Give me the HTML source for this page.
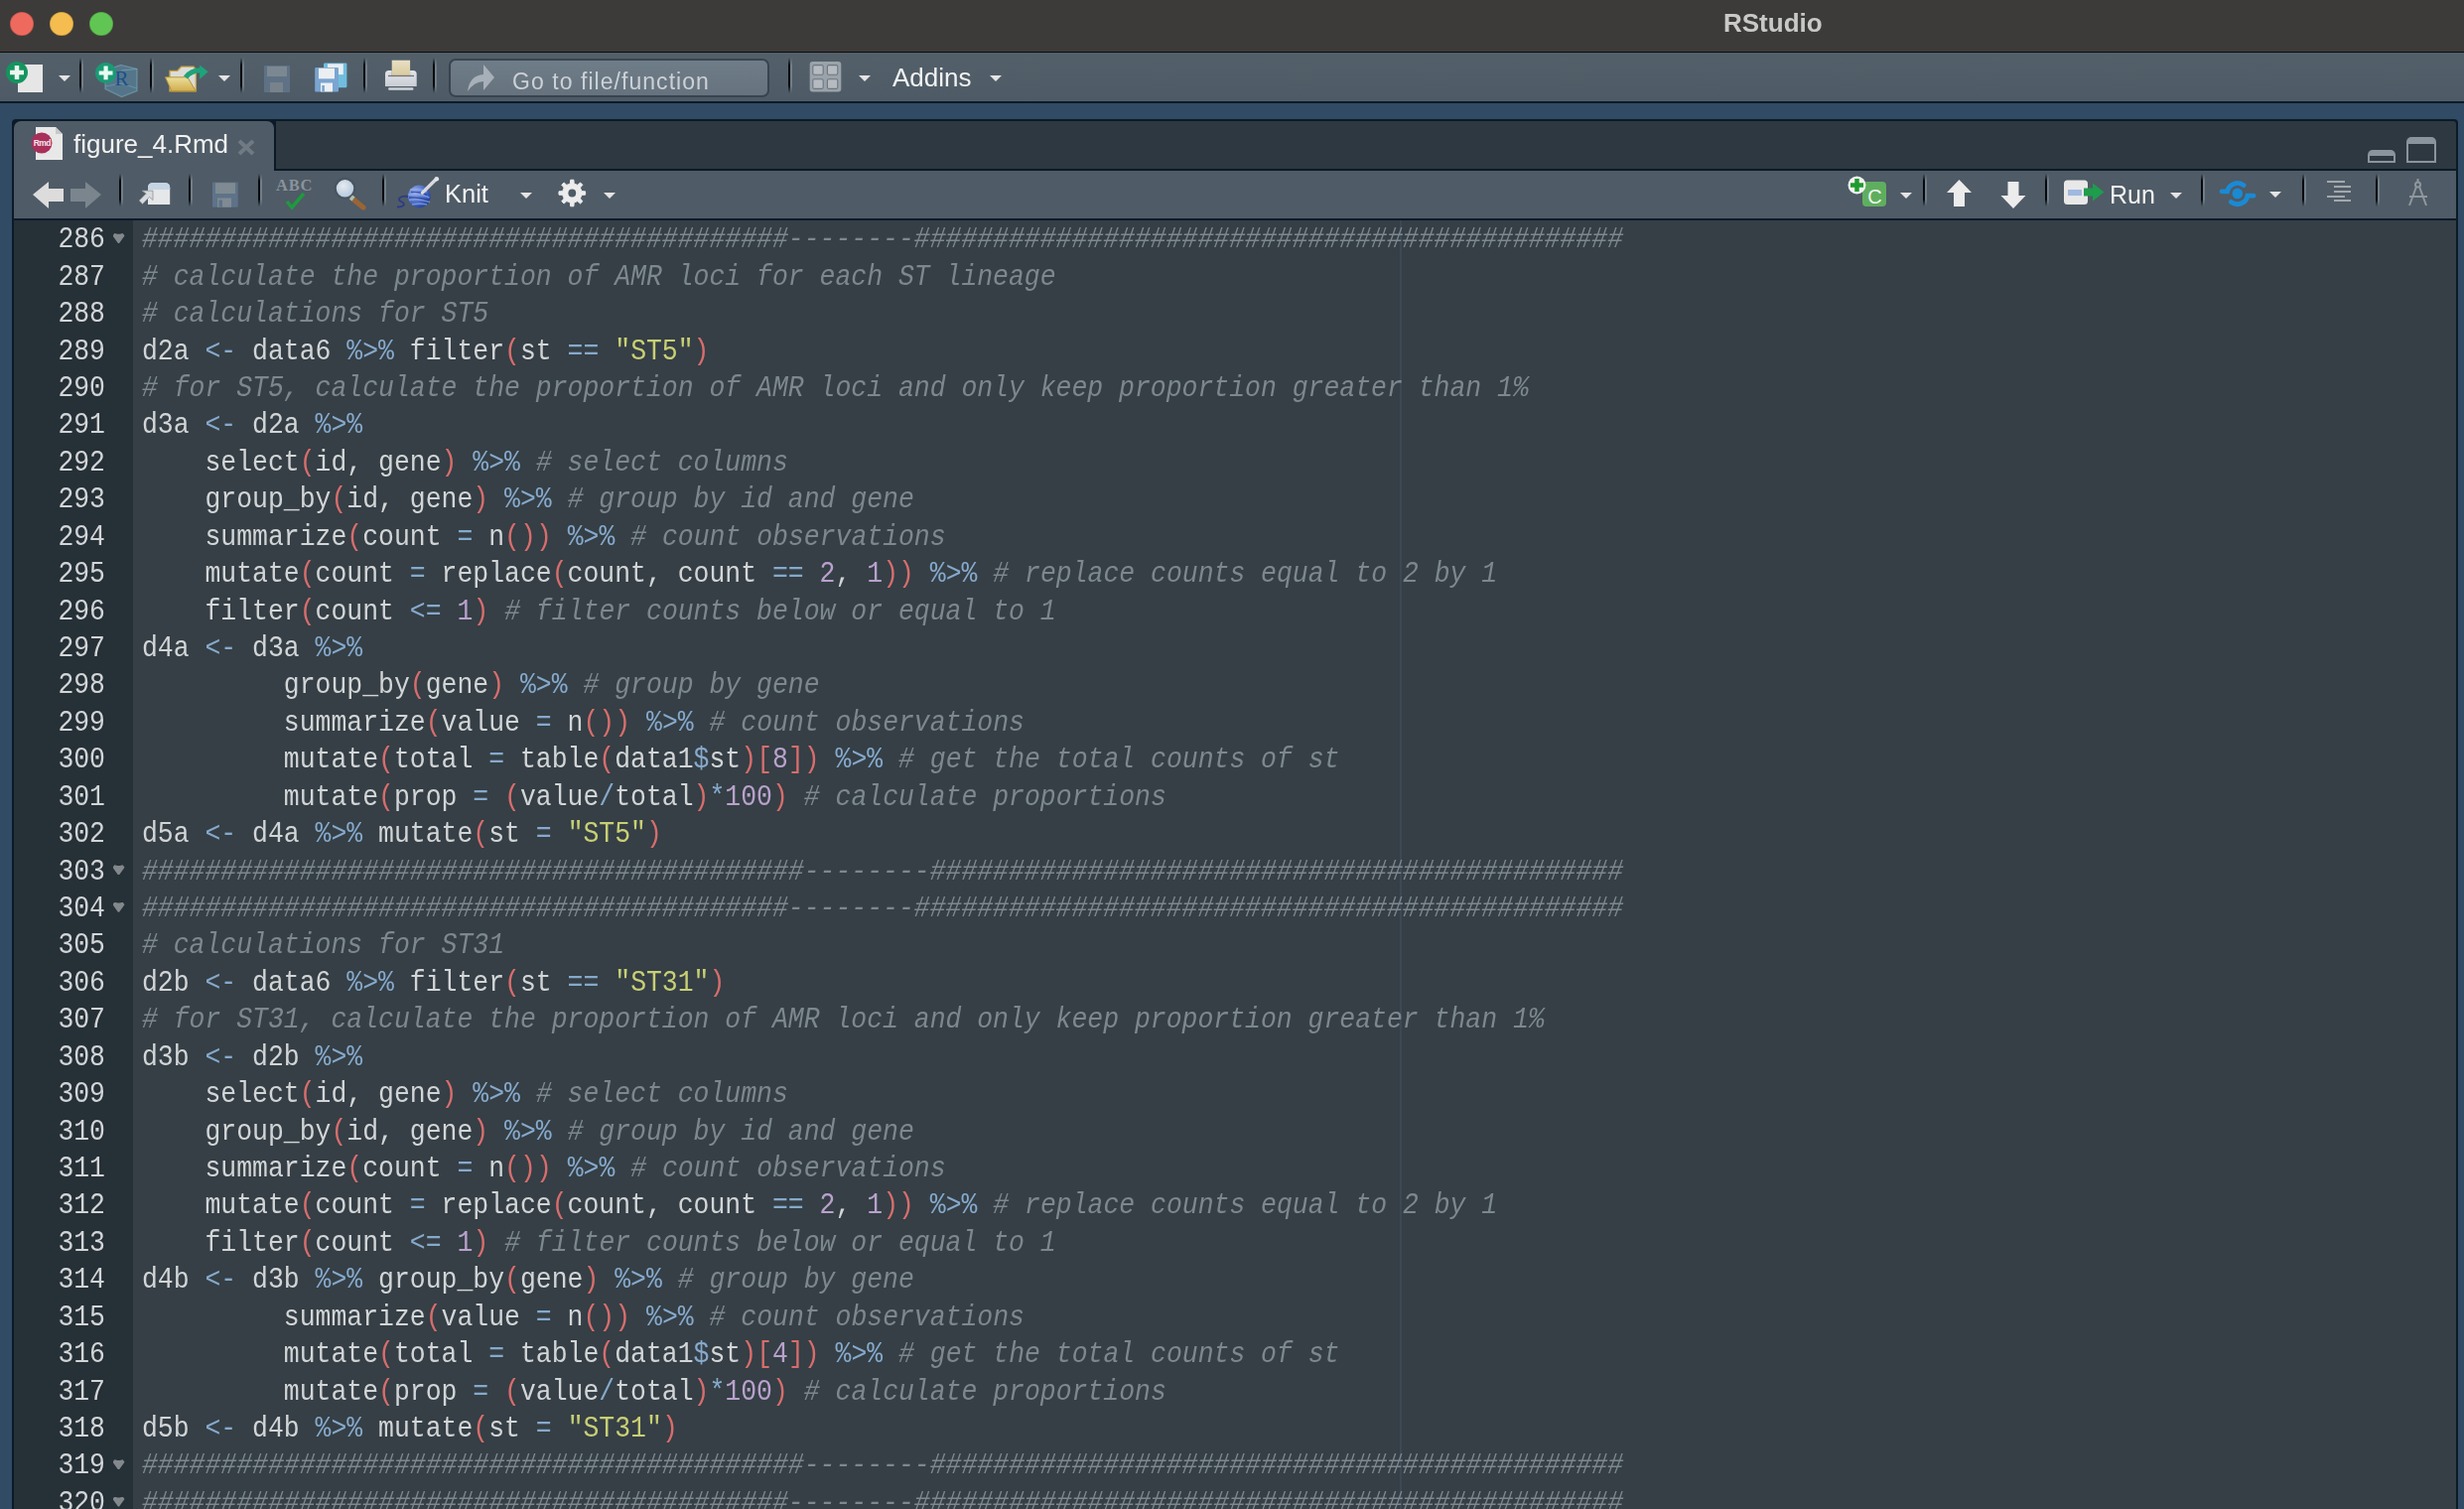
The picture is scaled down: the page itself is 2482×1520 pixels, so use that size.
<!DOCTYPE html>
<html><head><meta charset="utf-8">
<style>
html,body{margin:0;padding:0;}
body{-webkit-font-smoothing:antialiased;width:2482px;height:1520px;overflow:hidden;position:relative;background:#304b63;font-family:"Liberation Sans",sans-serif;}
.abs{position:absolute;}
#title{left:0;top:0;width:2482px;height:52px;background:#3d3b39;}
#titleline{left:0;top:52px;width:2482px;height:1px;background:#0b0b0b;}
.tl{position:absolute;width:24px;height:24px;border-radius:50%;top:12px;box-shadow:inset 0 0 0 0.8px rgba(0,0,0,0.18);}
#ttext{will-change:transform;left:1736px;top:6px;font-weight:bold;font-size:26px;color:#c9c9c9;line-height:34px;}
#tbar{left:0;top:53px;width:2482px;height:49px;background:linear-gradient(#53606a,#4e5b66);}
#tbarline{left:0;top:102px;width:2482px;height:2px;background:#0e1b28;}
.sep{position:absolute;width:3.5px;background:linear-gradient(to right,#05090d 0,#05090d 2px,rgba(125,138,148,0.75) 2px,rgba(125,138,148,0.75) 3.5px);-webkit-mask-image:linear-gradient(rgba(0,0,0,0),#000 22%,#000 78%,rgba(0,0,0,0));mask-image:linear-gradient(rgba(0,0,0,0),#000 22%,#000 78%,rgba(0,0,0,0));}
.dd{position:absolute;width:0;height:0;border-left:6px solid transparent;border-right:6px solid transparent;border-top:6px solid #e4e4e4;}
#goto{left:452px;top:59px;width:319px;height:35px;border:2px solid #38444f;border-radius:7px;background:linear-gradient(#6f7d89,#66737f);}
#gototext{will-change:transform;left:515.5px;top:66.5px;font-size:23px;letter-spacing:1.05px;color:#ccd1d6;line-height:30px;}
.ui{position:absolute;will-change:transform;color:#f2f2f2;font-size:25.5px;line-height:30px;}
#panel{left:12px;top:120px;width:2464px;height:1420px;background:#0c1a28;border-radius:4px 4px 0 0;}
#tabstrip{left:278px;top:122px;width:2196px;height:48px;background:#2d3841;border-radius:0 3px 0 0;}
#tab{left:14px;top:122px;width:262px;height:50px;background:#4f5b66;border-radius:7px 7px 0 0;}
#etbar{left:14px;top:172px;width:2460px;height:48px;background:#4f5b66;}
#gutter{left:14px;top:222px;width:120px;height:1300px;background:#263037;}
#code{left:134px;top:222px;width:2340px;height:1300px;background:#353f45;}
#margin{left:1410px;top:222px;width:2px;height:1300px;background:#3b4a55;}
.ln{position:absolute;left:0;white-space:pre;font-family:"Liberation Mono",monospace;font-size:30px;line-height:37.43px;color:#d2d5d7;}
#codetext{left:142.8px;top:0;transform:scaleX(0.88167);transform-origin:0 0;}
.gn{position:absolute;left:0;width:92px;text-align:right;white-space:pre;font-family:"Liberation Mono",monospace;font-size:30px;line-height:37.43px;color:#d2d5d7;}
#gtext{left:0;top:0;transform:scaleX(0.88167);transform-origin:92px 0;}
.fold{position:absolute;left:113.5px;width:12px;height:10px;background:#83888c;clip-path:polygon(0 25%,15% 0,40% 8%,60% 8%,85% 0,100% 25%,55% 100%,45% 100%);}
i.c{font-style:italic;color:#7d878e;}
b{font-weight:normal;}
b.s{color:#c9cf74;}
b.o{color:#86a9cc;}
b.p{color:#d86d6d;}
b.n{color:#b9a1cc;}
</style></head>
<body>
<div id="title" class="abs"></div>
<div id="titleline" class="abs"></div>
<div class="tl" style="left:10px;background:#ee6a5f;"></div>
<div class="tl" style="left:50px;background:#f5bd4f;"></div>
<div class="tl" style="left:90px;background:#61c554;"></div>
<div id="ttext" class="abs">RStudio</div>

<div id="tbar" class="abs"></div>
<div id="tbarline" class="abs"></div>

<!-- main toolbar icons -->
<svg class="abs" style="left:0;top:53px" width="1100" height="49" viewBox="0 53 1100 49">
  <defs><linearGradient id="fold" x1="0" y1="0" x2="0" y2="1"><stop offset="0" stop-color="#eadf9c"/><stop offset="1" stop-color="#d2ad4c"/></linearGradient></defs>
  <!-- new file -->
  <rect x="18" y="65" width="25" height="28" fill="#e6e6e6"/>
  <circle cx="17" cy="73" r="11" fill="#14955e"/>
  <path d="M17 66v14M10 73h14" stroke="#eef5ef" stroke-width="4.5"/>
  <!-- new project -->
  <path d="M122 65.5 L138 69.5 L138 91.5 L122.5 97.5 L106 89.5 L106 71 Z" fill="#5a8aa6" fill-opacity="0.55" stroke="#7fb0c4" stroke-opacity="0.55" stroke-width="1.2"/>
  <path d="M106 87 L122.5 84 L138 89" stroke="#7fb0c4" stroke-opacity="0.45" stroke-width="1.2" fill="none"/>
  <path d="M122.5 71 L138 69.5" stroke="#8fc0d4" stroke-opacity="0.45" stroke-width="1.2" fill="none"/>
  <text x="115.5" y="86" font-family="Liberation Serif" font-size="21" fill="#1d4f8a">R</text>
  <circle cx="106.6" cy="73.5" r="10.6" fill="#1a9a74"/>
  <path d="M106.6 66.5v13.8M99.7 73.5h13.8" stroke="#e6fbf1" stroke-width="4.2"/>
  <!-- open folder -->
  <path d="M171 71.3 h7.8 l3.9 -4.2 h12.3 l2.3 2.9 v21.8 h-26.3 z" fill="#dcdcd8" stroke="#c8a040" stroke-width="1.3"/>
  <path d="M166.5 77.8 h22.4 l8.4 14 h-24.3 z" fill="url(#fold)" stroke="#b4943a" stroke-width="1"/>
  <path d="M187 78 q5 -7 15 -7.2" stroke="#1fa37a" stroke-width="5" fill="none"/>
  <path d="M201.2 65.5 l8.5 6.8 l-8.5 7.5 z" fill="#1fa37a"/>
  <!-- save disabled -->
  <rect x="266" y="66" width="26" height="27" rx="1" fill="#5f7285"/>
  <rect x="269" y="67" width="20" height="10" fill="#7c8891"/>
  <rect x="272" y="83" width="13" height="10" fill="#77828b"/>
  <!-- save all -->
  <rect x="326" y="63.5" width="23.4" height="24.7" rx="1.2" fill="#70bde0"/>
  <rect x="330" y="64.3" width="15.8" height="10.8" fill="#e8eef2"/>
  <rect x="332" y="78" width="8" height="9.5" fill="#e8eef2"/>
  <rect x="317.2" y="67.9" width="23.8" height="24.5" rx="1.2" fill="#7aa5d0"/>
  <rect x="321" y="68.8" width="16" height="10.5" fill="#eceff2"/>
  <rect x="323" y="83.5" width="12" height="8.9" fill="#eceff2"/>
  <rect x="324.3" y="86" width="2.6" height="6.4" fill="#7aa5d0"/>
  <!-- printer -->
  <defs><linearGradient id="paper" x1="0" y1="0" x2="0" y2="1"><stop offset="0" stop-color="#e8e0c4"/><stop offset="1" stop-color="#d9c99c"/></linearGradient>
  <linearGradient id="pbody" x1="0" y1="0" x2="0" y2="1"><stop offset="0" stop-color="#e2e4e8"/><stop offset="1" stop-color="#c9cdd5"/></linearGradient></defs>
  <rect x="394.7" y="60.7" width="18.4" height="16" fill="url(#paper)"/>
  <path d="M388 87 v-12.5 q0 -3.5 3.5 -3.5 h3.2 v5.3 h18.4 v-5.3 h3.1 q3.5 0 3.5 3.5 v12.5 z" fill="url(#pbody)"/>
  <rect x="391" y="75.8" width="26" height="1.3" fill="#6f747a"/>
  <rect x="391.2" y="88.2" width="25.2" height="2.6" rx="0.8" fill="#cfd2da"/>
  <!-- goto arrow -->
  <path d="M471 92 q2 -16 16 -17 v-10 l11 13 l-11 13 v-9 q-9 0 -16 10z" fill="#a7b0b9"/>
  <!-- grid -->
  <rect x="815.7" y="62.1" width="31.6" height="30.4" rx="3" fill="#9aa2aa"/>
  <rect x="818.8" y="65.6" width="10.4" height="9.6" rx="1.5" fill="#b6bbc1" stroke="#6d767f" stroke-width="1.1"/>
  <rect x="833.4" y="65.6" width="10.4" height="9.6" rx="1.5" fill="#b6bbc1" stroke="#6d767f" stroke-width="1.1"/>
  <rect x="818.8" y="79.8" width="10.4" height="9.6" rx="1.5" fill="#b6bbc1" stroke="#6d767f" stroke-width="1.1"/>
  <rect x="833.4" y="79.8" width="10.4" height="9.6" rx="1.5" fill="#b6bbc1" stroke="#6d767f" stroke-width="1.1"/>
</svg>
<div class="sep" style="left:80px;top:57.5px;height:36px"></div>
<div class="sep" style="left:151px;top:57.5px;height:36px"></div>
<div class="sep" style="left:242px;top:57.5px;height:36px"></div>
<div class="sep" style="left:366px;top:57.5px;height:36px"></div>
<div class="sep" style="left:436px;top:57.5px;height:36px"></div>
<div class="sep" style="left:794px;top:57.5px;height:36px"></div>
<div class="dd" style="left:59px;top:76px"></div>
<div class="dd" style="left:220px;top:76px"></div>
<div class="dd" style="left:865px;top:76px"></div>
<div class="dd" style="left:997px;top:76px"></div>
<div id="goto" class="abs"></div>
<svg class="abs" style="left:0;top:53px" width="800" height="49" viewBox="0 53 800 49">
  <path d="M471 92 q2 -16 16 -17 v-10 l11 13 l-11 13 v-9 q-9 0 -16 10z" fill="#a7b0b9"/>
</svg>
<div id="gototext" class="abs">Go to file/function</div>
<div class="ui" style="left:899px;top:63px;font-size:26px;">Addins</div>

<!-- panel -->
<div id="panel" class="abs"></div>
<div id="tabstrip" class="abs"></div>
<div id="tab" class="abs"></div>
<div id="etbar" class="abs"></div>
<div id="gutter" class="abs"></div>
<div id="code" class="abs"></div>
<div id="margin" class="abs"></div>

<!-- tab contents -->
<svg class="abs" style="left:0;top:120px" width="300" height="52" viewBox="0 120 300 52">
  <path d="M36 128 h20 l7 7 v26 h-27 z" fill="#e8e8e8"/>
  <path d="M56 128 v7 h7 z" fill="#c9c9c9"/>
  <circle cx="42" cy="144" r="10.5" fill="#a8305a"/>
  <text x="42.3" y="147.3" font-family="Liberation Sans" font-weight="bold" font-size="8.6" fill="#f4e4ea" text-anchor="middle" letter-spacing="-0.7">Rmd</text>
  <path d="M241 142 l14 13 M255 142 l-14 13" stroke="#6f7a84" stroke-width="4"/>
</svg>
<div class="ui" style="left:74px;top:130px;font-size:26px;">figure_4.Rmd</div>

<!-- window buttons -->
<svg class="abs" style="left:2370px;top:130px" width="100" height="40" viewBox="2370 130 100 40">
  <path d="M2385 164 v-8 a5 5 0 0 1 5 -5 h18 a5 5 0 0 1 5 5 v8 z" fill="#8a949d"/>
  <rect x="2387" y="157" width="24" height="5" fill="#2d3841"/>
  <path d="M2424 164 v-21 a5 5 0 0 1 5 -5 h20 a5 5 0 0 1 5 5 v21 z" fill="#8a949d"/>
  <rect x="2426" y="145" width="26" height="17" fill="#2d3841"/>
</svg>

<!-- editor toolbar -->
<svg class="abs" style="left:0;top:172px" width="2482" height="48" viewBox="0 172 2482 48">
  <!-- back -->
  <path d="M33 196 l16 -13 v7 h15 v13 h-15 v7 z" fill="#dcdcdc"/>
  <!-- forward -->
  <path d="M102 196 l-16 -13 v7 h-15 v13 h15 v7 z" fill="#7a858e"/>
  <!-- show in window -->
  <path d="M149 205.9 V189 q0 -4.8 4.8 -4.8 h12.6 q4.8 0 4.8 4.8 V205.9 z" fill="#e6e7e9"/>
  <path d="M149 191 V189 q0 -4.8 4.8 -4.8 h12.6 q4.8 0 4.8 4.8 V191 z" fill="#c5d5e4"/>
  <path d="M143 192.1 H154 V201.6 L150.6 198.3 L143.6 205.4 L140.2 202 L147.2 195 Z" fill="#d9dadd" stroke="#8a9499" stroke-width="0.8" stroke-linejoin="round"/>
  <!-- save disabled -->
  <rect x="214" y="183.5" width="25.7" height="25.2" rx="1" fill="#5e7389"/>
  <rect x="217" y="184.2" width="20" height="10.8" fill="#7f8a92"/>
  <rect x="219" y="199.5" width="14" height="9.2" fill="#7f8a92"/>
  <rect x="220.5" y="201.5" width="3.5" height="7.2" fill="#5e7389"/>
  <!-- ABC -->
  <text x="278" y="191.5" font-family="Liberation Serif" font-weight="bold" font-size="16.5" letter-spacing="0.8" fill="#8a939b">ABC</text>
  <path d="M289 203 l5 6 l12 -14" stroke="#1e9a3e" stroke-width="3.5" fill="none"/>
  <!-- magnifier -->
  <defs>
    <radialGradient id="lens" cx="0.4" cy="0.35" r="0.7"><stop offset="0" stop-color="#e6eaee"/><stop offset="1" stop-color="#b3c9df"/></radialGradient>
    <radialGradient id="ball" cx="0.3" cy="0.3" r="0.8"><stop offset="0" stop-color="#93acec"/><stop offset="0.6" stop-color="#4a6cc4"/><stop offset="1" stop-color="#1d3c96"/></radialGradient>
  </defs>
  <circle cx="347.5" cy="189.8" r="11" fill="#3e4b57" opacity="0.35"/>
  <path d="M355 200 l11 9" stroke="#9a6536" stroke-width="5.2" stroke-linecap="round"/>
  <path d="M353.5 198.5 l2.5 2" stroke="#a9c0b8" stroke-width="5" />
  <circle cx="347.5" cy="189.8" r="8.7" fill="url(#lens)"/>
  <!-- knit -->
  <path d="M411.5 198 C403 196.5, 399.5 201, 404 203 C409 205, 407.5 208.5, 400 208.5" stroke="#2c3a8a" stroke-width="1.8" fill="none"/>
  <circle cx="422.3" cy="197.8" r="11.4" fill="url(#ball)"/>
  <path d="M413 191 q9 -2 17 2 M411.5 196 q10 -2 21 3 M412 201.5 q10 -2 21 2 M415 206 q8 -1.5 15 0" stroke="#9fb5f0" stroke-opacity="0.6" stroke-width="1.4" fill="none"/>
  <path d="M414 193.5 q9 -1 16 3 M412 199 q10 -1 20 3" stroke="#25368f" stroke-opacity="0.7" stroke-width="1.3" fill="none"/>
  <path d="M425.5 194.1 L439 180.8" stroke="#d9d9de" stroke-width="3.4" stroke-linecap="round"/>
  <circle cx="439.8" cy="180.3" r="2.3" fill="#e4e4e8"/>
  <!-- gear -->
  <g transform="translate(576.3 194.5)">
    <path d="M-3.67 -8.87 L-1.87 -9.62 L-1.63 -13.30 L1.63 -13.30 L1.87 -9.62 L3.67 -8.87 L5.48 -8.12 L8.25 -10.56 L10.56 -8.25 L8.12 -5.48 L8.87 -3.67 L9.62 -1.87 L13.30 -1.63 L13.30 1.63 L9.62 1.87 L8.87 3.67 L8.12 5.48 L10.56 8.25 L8.25 10.56 L5.48 8.12 L3.67 8.87 L1.87 9.62 L1.63 13.30 L-1.63 13.30 L-1.87 9.62 L-3.67 8.87 L-5.48 8.12 L-8.25 10.56 L-10.56 8.25 L-8.12 5.48 L-8.87 3.67 L-9.62 1.87 L-13.30 1.63 L-13.30 -1.63 L-9.62 -1.87 L-8.87 -3.67 L-8.12 -5.48 L-10.56 -8.25 L-8.25 -10.56 L-5.48 -8.12Z" fill="#ececec" stroke="#ececec" stroke-width="1" stroke-linejoin="round"/>
    <circle r="3.9" fill="#4f5b66"/>
  </g>
  <!-- insert chunk -->
  <rect x="1876" y="183" width="24" height="25" rx="4" fill="#5fae5f"/>
  <text x="1888.5" y="205" font-family="Liberation Sans" font-size="20" fill="#eef7ee" text-anchor="middle">C</text>
  <circle cx="1870.5" cy="186.5" r="9" fill="#f2f2f2"/>
  <path d="M1870.5 180v13M1864 186.5h13" stroke="#1f9a2f" stroke-width="4.5"/>
  <!-- up -->
  <path d="M1973.5 181 l12.5 13 h-7 v14 h-11 v-14 h-7 z" fill="#ececec"/>
  <!-- down -->
  <path d="M2028 210 l12.5 -13 h-7 v-14 h-11 v14 h-7 z" fill="#ececec"/>
  <!-- run -->
  <rect x="2079" y="181.5" width="24" height="24.5" rx="3.5" fill="#e8e8e8"/>
  <rect x="2083" y="191" width="14" height="6" fill="#9fb9e0"/>
  <path d="M2099 189.5 h9 v-5 l11.5 9 l-11.5 9 v-5 h-9 z" fill="#1f9c4c"/>
  <!-- rerun -->
  <path d="M2238 192.8 H2243.6 A10.5 10.5 0 0 1 2260.2 186.6" stroke="#1a8ad4" stroke-width="4.8" stroke-linecap="round" fill="none"/>
  <path d="M2270 197.2 H2264 A10.5 10.5 0 0 1 2247.2 203.4" stroke="#1a8ad4" stroke-width="4.8" stroke-linecap="round" fill="none"/>
  <circle cx="2253.8" cy="194.9" r="5.3" fill="#1a8ad4"/>
  <!-- align -->
  <path d="M2344 183h18 M2351 188h17 M2351 193h17 M2344 198h18 M2351 202h17" stroke="#a3a8ac" stroke-width="2.2"/>
  <!-- compass -->
  <circle cx="2435.5" cy="186" r="2.5" fill="none" stroke="#8f979d" stroke-width="2"/>
  <path d="M2435.5 180v3 M2434 188 l-7 19 M2437 188 l7 19 M2427 198 h18" stroke="#8f979d" stroke-width="2"/>
</svg>
<div class="sep" style="left:120px;top:175px;height:33px"></div>
<div class="sep" style="left:190px;top:175px;height:33px"></div>
<div class="sep" style="left:260px;top:175px;height:33px"></div>
<div class="sep" style="left:385px;top:175px;height:33px"></div>
<div class="sep" style="left:1937px;top:175px;height:33px"></div>
<div class="sep" style="left:2060px;top:175px;height:33px"></div>
<div class="sep" style="left:2217px;top:175px;height:33px"></div>
<div class="sep" style="left:2319px;top:175px;height:33px"></div>
<div class="sep" style="left:2393px;top:175px;height:33px"></div>
<div class="dd" style="left:524px;top:194px"></div>
<div class="dd" style="left:608px;top:194px"></div>
<div class="dd" style="left:1914px;top:194px"></div>
<div class="dd" style="left:2186px;top:194px"></div>
<div class="dd" style="left:2286px;top:193px"></div>
<div class="ui" style="left:448px;top:180px;">Knit</div>
<div class="ui" style="left:2125px;top:181px;font-size:25px;">Run</div>

<!-- editor content -->
<div class="abs" id="gtext" style="left:14px;top:0;width:120px;height:1520px;">
<div class="gn" style="top:223.30px">286</div>
<div class="gn" style="top:260.73px">287</div>
<div class="gn" style="top:298.16px">288</div>
<div class="gn" style="top:335.59px">289</div>
<div class="gn" style="top:373.02px">290</div>
<div class="gn" style="top:410.45px">291</div>
<div class="gn" style="top:447.88px">292</div>
<div class="gn" style="top:485.31px">293</div>
<div class="gn" style="top:522.74px">294</div>
<div class="gn" style="top:560.17px">295</div>
<div class="gn" style="top:597.60px">296</div>
<div class="gn" style="top:635.03px">297</div>
<div class="gn" style="top:672.46px">298</div>
<div class="gn" style="top:709.89px">299</div>
<div class="gn" style="top:747.32px">300</div>
<div class="gn" style="top:784.75px">301</div>
<div class="gn" style="top:822.18px">302</div>
<div class="gn" style="top:859.61px">303</div>
<div class="gn" style="top:897.04px">304</div>
<div class="gn" style="top:934.47px">305</div>
<div class="gn" style="top:971.90px">306</div>
<div class="gn" style="top:1009.33px">307</div>
<div class="gn" style="top:1046.76px">308</div>
<div class="gn" style="top:1084.19px">309</div>
<div class="gn" style="top:1121.62px">310</div>
<div class="gn" style="top:1159.05px">311</div>
<div class="gn" style="top:1196.48px">312</div>
<div class="gn" style="top:1233.91px">313</div>
<div class="gn" style="top:1271.34px">314</div>
<div class="gn" style="top:1308.77px">315</div>
<div class="gn" style="top:1346.20px">316</div>
<div class="gn" style="top:1383.63px">317</div>
<div class="gn" style="top:1421.06px">318</div>
<div class="gn" style="top:1458.49px">319</div>
<div class="gn" style="top:1495.92px">320</div>
</div>
<div class="abs" style="left:0;top:0;width:2482px;height:1520px;">
<div class="fold" style="top:235.0px"></div>
<div class="fold" style="top:871.3px"></div>
<div class="fold" style="top:908.7px"></div>
<div class="fold" style="top:1470.2px"></div>
<div class="fold" style="top:1507.6px"></div>
</div>
<div class="abs" id="codetext" style="top:0;width:3000px;height:1520px;">
<div class="ln" style="top:223.30px"><i class="c">#########################################--------#############################################</i></div>
<div class="ln" style="top:260.73px"><i class="c"># calculate the proportion of AMR loci for each ST lineage</i></div>
<div class="ln" style="top:298.16px"><i class="c"># calculations for ST5</i></div>
<div class="ln" style="top:335.59px">d2a <b class="o">&lt;-</b> data6 <b class="o">%&gt;%</b> filter<b class="p">(</b>st <b class="o">==</b> <b class="s">&quot;ST5&quot;</b><b class="p">)</b></div>
<div class="ln" style="top:373.02px"><i class="c"># for ST5, calculate the proportion of AMR loci and only keep proportion greater than 1%</i></div>
<div class="ln" style="top:410.45px">d3a <b class="o">&lt;-</b> d2a <b class="o">%&gt;%</b></div>
<div class="ln" style="top:447.88px">    select<b class="p">(</b>id, gene<b class="p">)</b> <b class="o">%&gt;%</b> <i class="c"># select columns</i></div>
<div class="ln" style="top:485.31px">    group_by<b class="p">(</b>id, gene<b class="p">)</b> <b class="o">%&gt;%</b> <i class="c"># group by id and gene</i></div>
<div class="ln" style="top:522.74px">    summarize<b class="p">(</b>count <b class="o">=</b> n<b class="p">(</b><b class="p">)</b><b class="p">)</b> <b class="o">%&gt;%</b> <i class="c"># count observations</i></div>
<div class="ln" style="top:560.17px">    mutate<b class="p">(</b>count <b class="o">=</b> replace<b class="p">(</b>count, count <b class="o">==</b> <b class="n">2</b>, <b class="n">1</b><b class="p">)</b><b class="p">)</b> <b class="o">%&gt;%</b> <i class="c"># replace counts equal to 2 by 1</i></div>
<div class="ln" style="top:597.60px">    filter<b class="p">(</b>count <b class="o">&lt;=</b> <b class="n">1</b><b class="p">)</b> <i class="c"># filter counts below or equal to 1</i></div>
<div class="ln" style="top:635.03px">d4a <b class="o">&lt;-</b> d3a <b class="o">%&gt;%</b></div>
<div class="ln" style="top:672.46px">         group_by<b class="p">(</b>gene<b class="p">)</b> <b class="o">%&gt;%</b> <i class="c"># group by gene</i></div>
<div class="ln" style="top:709.89px">         summarize<b class="p">(</b>value <b class="o">=</b> n<b class="p">(</b><b class="p">)</b><b class="p">)</b> <b class="o">%&gt;%</b> <i class="c"># count observations</i></div>
<div class="ln" style="top:747.32px">         mutate<b class="p">(</b>total <b class="o">=</b> table<b class="p">(</b>data1<b class="o">$</b>st<b class="p">)</b><b class="p">[</b><b class="n">8</b><b class="p">]</b><b class="p">)</b> <b class="o">%&gt;%</b> <i class="c"># get the total counts of st</i></div>
<div class="ln" style="top:784.75px">         mutate<b class="p">(</b>prop <b class="o">=</b> <b class="p">(</b>value<b class="o">/</b>total<b class="p">)</b><b class="o">*</b><b class="n">100</b><b class="p">)</b> <i class="c"># calculate proportions</i></div>
<div class="ln" style="top:822.18px">d5a <b class="o">&lt;-</b> d4a <b class="o">%&gt;%</b> mutate<b class="p">(</b>st <b class="o">=</b> <b class="s">&quot;ST5&quot;</b><b class="p">)</b></div>
<div class="ln" style="top:859.61px"><i class="c">##########################################--------############################################</i></div>
<div class="ln" style="top:897.04px"><i class="c">#########################################--------#############################################</i></div>
<div class="ln" style="top:934.47px"><i class="c"># calculations for ST31</i></div>
<div class="ln" style="top:971.90px">d2b <b class="o">&lt;-</b> data6 <b class="o">%&gt;%</b> filter<b class="p">(</b>st <b class="o">==</b> <b class="s">&quot;ST31&quot;</b><b class="p">)</b></div>
<div class="ln" style="top:1009.33px"><i class="c"># for ST31, calculate the proportion of AMR loci and only keep proportion greater than 1%</i></div>
<div class="ln" style="top:1046.76px">d3b <b class="o">&lt;-</b> d2b <b class="o">%&gt;%</b></div>
<div class="ln" style="top:1084.19px">    select<b class="p">(</b>id, gene<b class="p">)</b> <b class="o">%&gt;%</b> <i class="c"># select columns</i></div>
<div class="ln" style="top:1121.62px">    group_by<b class="p">(</b>id, gene<b class="p">)</b> <b class="o">%&gt;%</b> <i class="c"># group by id and gene</i></div>
<div class="ln" style="top:1159.05px">    summarize<b class="p">(</b>count <b class="o">=</b> n<b class="p">(</b><b class="p">)</b><b class="p">)</b> <b class="o">%&gt;%</b> <i class="c"># count observations</i></div>
<div class="ln" style="top:1196.48px">    mutate<b class="p">(</b>count <b class="o">=</b> replace<b class="p">(</b>count, count <b class="o">==</b> <b class="n">2</b>, <b class="n">1</b><b class="p">)</b><b class="p">)</b> <b class="o">%&gt;%</b> <i class="c"># replace counts equal to 2 by 1</i></div>
<div class="ln" style="top:1233.91px">    filter<b class="p">(</b>count <b class="o">&lt;=</b> <b class="n">1</b><b class="p">)</b> <i class="c"># filter counts below or equal to 1</i></div>
<div class="ln" style="top:1271.34px">d4b <b class="o">&lt;-</b> d3b <b class="o">%&gt;%</b> group_by<b class="p">(</b>gene<b class="p">)</b> <b class="o">%&gt;%</b> <i class="c"># group by gene</i></div>
<div class="ln" style="top:1308.77px">         summarize<b class="p">(</b>value <b class="o">=</b> n<b class="p">(</b><b class="p">)</b><b class="p">)</b> <b class="o">%&gt;%</b> <i class="c"># count observations</i></div>
<div class="ln" style="top:1346.20px">         mutate<b class="p">(</b>total <b class="o">=</b> table<b class="p">(</b>data1<b class="o">$</b>st<b class="p">)</b><b class="p">[</b><b class="n">4</b><b class="p">]</b><b class="p">)</b> <b class="o">%&gt;%</b> <i class="c"># get the total counts of st</i></div>
<div class="ln" style="top:1383.63px">         mutate<b class="p">(</b>prop <b class="o">=</b> <b class="p">(</b>value<b class="o">/</b>total<b class="p">)</b><b class="o">*</b><b class="n">100</b><b class="p">)</b> <i class="c"># calculate proportions</i></div>
<div class="ln" style="top:1421.06px">d5b <b class="o">&lt;-</b> d4b <b class="o">%&gt;%</b> mutate<b class="p">(</b>st <b class="o">=</b> <b class="s">&quot;ST31&quot;</b><b class="p">)</b></div>
<div class="ln" style="top:1458.49px"><i class="c">##########################################--------############################################</i></div>
<div class="ln" style="top:1495.92px"><i class="c">#########################################--------#############################################</i></div>
</div>
</body></html>
